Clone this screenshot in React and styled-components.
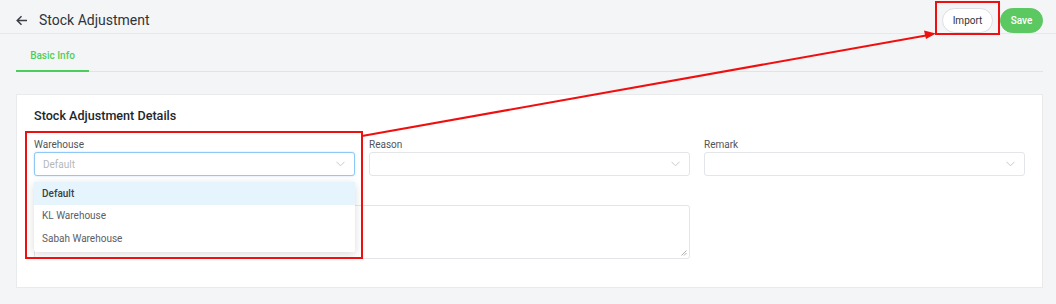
import React from 'react';
import styled, { createGlobalStyle } from 'styled-components';

const GlobalStyle = createGlobalStyle`
  html, body {
    margin: 0;
    padding: 0;
    background: #f4f5f7;
    font-family: Roboto, "Liberation Sans", Arial, sans-serif;
  }
`;

const Page = styled.div`
  position: relative;
  width: 1056px;
  height: 304px;
  overflow: hidden;
  background: #f4f5f7;
`;

const Header = styled.div`
  box-sizing: border-box;
  height: 34px;
  display: flex;
  align-items: center;
  padding: 7px 13px 0 16px;
  border-bottom: 1px solid #e7e8ea;
`;

const BackButton = styled.span`
  display: flex;
  align-items: center;
  width: 14px;
  margin-right: 9px;
  color: #3a3f45;
`;

const Title = styled.h1`
  margin: 0;
  font-size: 14px;
  font-weight: 400;
  color: #2f3439;
  flex: 1;
`;

const Actions = styled.div`
  display: flex;
  gap: 7px;
  align-items: center;
`;

const Button = styled.button`
  box-sizing: border-box;
  width: ${p => (p.primary ? '43px' : '51px')};
  height: 25px;
  padding: 0;
  border-radius: 13px;
  font-family: inherit;
  font-size: 10px;
  font-weight: ${p => (p.primary ? 500 : 400)};
  border: 1px solid ${p => (p.primary ? '#5bc862' : '#dcdfe3')};
  background: ${p => (p.primary ? '#5bc862' : '#fff')};
  color: ${p => (p.primary ? '#fff' : '#333')};
  cursor: pointer;
`;

const TabBar = styled.div`
  margin: 0 13px 0 16px;
  height: 37px;
  display: flex;
  border-bottom: 1px solid #e2e3e6;
`;

const Tab = styled.div`
  width: 73px;
  display: flex;
  align-items: center;
  justify-content: center;
  padding-top: 6px;
  box-sizing: border-box;
  font-size: 10px;
  font-weight: 500;
  color: ${p => (p.active ? '#4ccf5a' : '#666')};
  border-bottom: 2px solid ${p => (p.active ? '#4ccf5a' : 'transparent')};
  margin-bottom: -1px;
`;

const Card = styled.div`
  margin: 22px 13px 0 16px;
  background: #fff;
  border: 1px solid #e9eaec;
  padding: 11px 17px 28px 17px;
`;

const CardTitle = styled.h2`
  margin: 0 0 12px;
  font-size: 12.6px;
  line-height: 20px;
  font-weight: 500;
  color: #22272c;
`;

const Grid = styled.div`
  display: grid;
  grid-template-columns: repeat(3, 321px);
  column-gap: 14px;
  row-gap: 4px;
`;

const Field = styled.div`
  position: relative;
  grid-column: span ${p => p.span || 1};
`;

const Label = styled.div`
  font-size: 10px;
  line-height: 14px;
  min-height: 14px;
  color: #50555b;
  margin-top: ${p => p.top || 0}px;
  margin-bottom: ${p => p.bottom || 0}px;
`;

const SelectBox = styled.div`
  box-sizing: border-box;
  height: 24px;
  display: flex;
  align-items: center;
  justify-content: space-between;
  padding: 0 9px 0 8px;
  border-radius: 3px;
  border: 1px solid ${p => (p.focused ? '#8fc8f6' : '#e3e5e8')};
  box-shadow: ${p => (p.focused ? '0 0 2px rgba(64,160,240,0.35)' : 'none')};
  background: #fff;
  font-size: 10px;
  color: #b4b8bd;
`;

const TextArea = styled.div`
  position: relative;
  box-sizing: border-box;
  height: 54px;
  border: 1px solid #e3e5e8;
  border-radius: 3px;
  background: #fff;
`;

const Grip = styled.svg`
  position: absolute;
  right: 2px;
  bottom: 2px;
`;

const Menu = styled.div`
  position: absolute;
  top: 44px;
  left: 0;
  width: 321px;
  background: #fff;
  border-radius: 2px;
  box-shadow: 0 2px 8px rgba(0, 0, 0, 0.15);
  z-index: 2;
  padding-bottom: 2px;
`;

const Option = styled.div`
  height: 22.5px;
  display: flex;
  align-items: center;
  padding-left: 8px;
  font-size: 10px;
  font-weight: ${p => (p.selected ? 500 : 400)};
  color: ${p => (p.selected ? '#3c4147' : '#5b6066')};
  background: ${p => (p.selected ? '#e5f4fd' : '#fff')};
`;

const Highlight = styled.div`
  position: absolute;
  box-sizing: border-box;
  border: 2px solid #f00f0f;
  z-index: 5;
`;

const Arrow = styled.svg`
  position: absolute;
  left: 0;
  top: 0;
  z-index: 5;
  pointer-events: none;
`;

const Chevron = () => (
  <svg width="9" height="6" viewBox="0 0 9 6">
    <path d="M0.5 0.8 L4.5 4.8 L8.5 0.8" fill="none" stroke="#c5c8cc" strokeWidth="1" />
  </svg>
);

const warehouses = ['Default', 'KL Warehouse', 'Sabah Warehouse'];

export default function App() {
  return (
    <Page>
      <GlobalStyle />
      <Header>
        <BackButton>
          <svg width="12" height="11" viewBox="0 0 12 11">
            <path d="M11 5.5 H1.5 M5.5 1.2 L1.2 5.5 L5.5 9.8" fill="none" stroke="#3a3f45" strokeWidth="1.5" />
          </svg>
        </BackButton>
        <Title>Stock Adjustment</Title>
        <Actions>
          <Button>Import</Button>
          <Button primary>Save</Button>
        </Actions>
      </Header>
      <TabBar>
        <Tab active>Basic Info</Tab>
      </TabBar>
      <Card>
        <CardTitle>Stock Adjustment Details</CardTitle>
        <Grid>
          <Field>
            <Label>Warehouse</Label>
            <SelectBox focused>
              <span>Default</span>
              <Chevron />
            </SelectBox>
            <Menu>
              {warehouses.map((w, i) => (
                <Option key={w} selected={i === 0}>{w}</Option>
              ))}
            </Menu>
          </Field>
          <Field>
            <Label>Reason</Label>
            <SelectBox>
              <span />
              <Chevron />
            </SelectBox>
          </Field>
          <Field>
            <Label>Remark</Label>
            <SelectBox>
              <span />
              <Chevron />
            </SelectBox>
          </Field>
          <Field span={2}>
            {/* label of this field sits under the open dropdown */}
            <Label top={8} bottom={3} />
            <TextArea>
              <Grip width="6" height="6" viewBox="0 0 6 6">
                <path d="M5.5 0.5 L0.5 5.5 M5.5 3 L3 5.5" stroke="#999" strokeWidth="0.8" />
              </Grip>
            </TextArea>
          </Field>
        </Grid>
      </Card>

      <Highlight style={{ left: 25, top: 131, width: 338, height: 128 }} />
      <Highlight style={{ left: 935, top: 1, width: 65, height: 34 }} />
      <Arrow width="1056" height="304">
        <line x1="362" y1="136" x2="926" y2="35.5" stroke="#f00f0f" strokeWidth="2" />
        <polygon points="936,33.5 924,30.5 926,39" fill="#f00f0f" />
      </Arrow>
    </Page>
  );
}
